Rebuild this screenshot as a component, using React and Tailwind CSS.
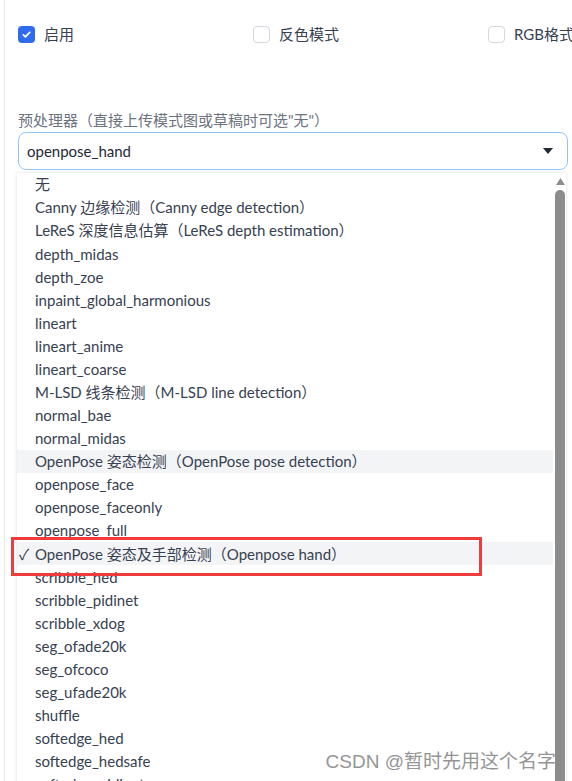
import React from 'react';

const options = [
    '无',
    'Canny 边缘检测（Canny edge detection）',
    'LeReS 深度信息估算（LeReS depth estimation）',
    'depth_midas',
    'depth_zoe',
    'inpaint_global_harmonious',
    'lineart',
    'lineart_anime',
    'lineart_coarse',
    'M-LSD 线条检测（M-LSD line detection）',
    'normal_bae',
    'normal_midas',
    'OpenPose 姿态检测（OpenPose pose detection）',
    'openpose_face',
    'openpose_faceonly',
    'openpose_full',
    'OpenPose 姿态及手部检测（Openpose hand）',
    'scribble_hed',
    'scribble_pidinet',
    'scribble_xdog',
    'seg_ofade20k',
    'seg_ofcoco',
    'seg_ufade20k',
    'shuffle',
    'softedge_hed',
    'softedge_hedsafe',
    'softedge_pidinet',
];

const HOVERED = 'OpenPose 姿态检测（OpenPose pose detection）';
const SELECTED = 'OpenPose 姿态及手部检测（Openpose hand）';

const Checkbox = ({ checked, label }) => (
    <label className="flex items-center gap-[9px] w-[235px] shrink-0">
        {checked ? (
            <span className="w-[17px] h-[17px] rounded-[4px] bg-[#2f6bed] flex items-center justify-center">
                <svg width="11" height="11" viewBox="0 0 12 12" fill="none">
                    <path d="M2.5 6.3l2.3 2.3 4.7-5" stroke="white" strokeWidth="1.9" strokeLinecap="round" strokeLinejoin="round" />
                </svg>
            </span>
        ) : (
            <span className="w-[17px] h-[17px] rounded-[4px] border border-[#d4d7dd] bg-white" />
        )}
        <span className="text-[15px] text-[#374151] whitespace-nowrap">{label}</span>
    </label>
);

export default function App() {
    return (
        <div
            className="relative w-[572px] h-[781px] overflow-hidden bg-white flex"
            style={{ fontFamily: '"Lato", "Noto Sans CJK SC", sans-serif' }}
        >
            <div className="w-[4px] shrink-0" />
            <div className="flex-1 border-l border-[#e5e7eb] pl-[13px] pt-[25px]">
                {/* checkbox row */}
                <div className="flex h-[18px] items-center">
                    <Checkbox checked label="启用" />
                    <Checkbox label="反色模式" />
                    <Checkbox label="RGB格式" />
                </div>

                {/* preprocessor select */}
                <div className="mt-[67px] text-[15px] leading-[20px] text-[#6b7280] whitespace-nowrap">
                    预处理器（直接上传模式图或草稿时可选"无"）
                </div>
                <div className="mt-[2px] w-[550px] h-[38px] rounded-[8px] border border-[#93c5fd] flex items-center justify-between pl-[8px] pr-[14px]">
                    <span className="text-[15px] text-[#1f2937]">openpose_hand</span>
                    <svg width="10" height="6" viewBox="0 0 10 6">
                        <path d="M0 0h10L5 6z" fill="#1f2937" />
                    </svg>
                </div>

                {/* open option list */}
                <div className="-ml-[1px] mt-[3px] w-[549px] flex bg-white shadow-[0_0_3px_rgba(0,0,0,0.15)]">
                    <ul className="flex-1 pr-[2px]">
                        {options.map((opt) => (
                            <li
                                key={opt}
                                className={
                                    'relative h-[23.08px] flex items-center pl-[18px] text-[15px] text-[#374151] whitespace-nowrap ' +
                                    (opt === HOVERED || opt === SELECTED ? 'bg-[#f3f4f6]' : '')
                                }
                            >
                                {opt === SELECTED && (
                                    <span className="absolute left-[2px] text-[15px]">✓</span>
                                )}
                                {opt}
                            </li>
                        ))}
                    </ul>
                    <div className="w-[10px] mr-[1px] flex flex-col items-center">
                        <svg width="9" height="8" viewBox="0 0 9 8" className="mt-[5px]">
                            <path d="M0 7L4.5 0 9 7z" fill="#8c8c8c" />
                        </svg>
                        <div className="mt-[4px] w-[10px] flex-1 rounded-t-full bg-[#8c8c8c]" />
                    </div>
                </div>
            </div>

            {/* red highlight box */}
            <div className="absolute left-[11px] top-[537px] w-[471px] h-[39px] border-[3px] border-[#ef3b3b]" />

            {/* watermark */}
            <div
                className="absolute right-[16px] top-[748px] text-[19px] text-[#959595] whitespace-nowrap"
                style={{ fontFamily: '"Liberation Sans", "Noto Sans CJK SC", sans-serif' }}
            >
                CSDN @暂时先用这个名字
            </div>
        </div>
    );
}
